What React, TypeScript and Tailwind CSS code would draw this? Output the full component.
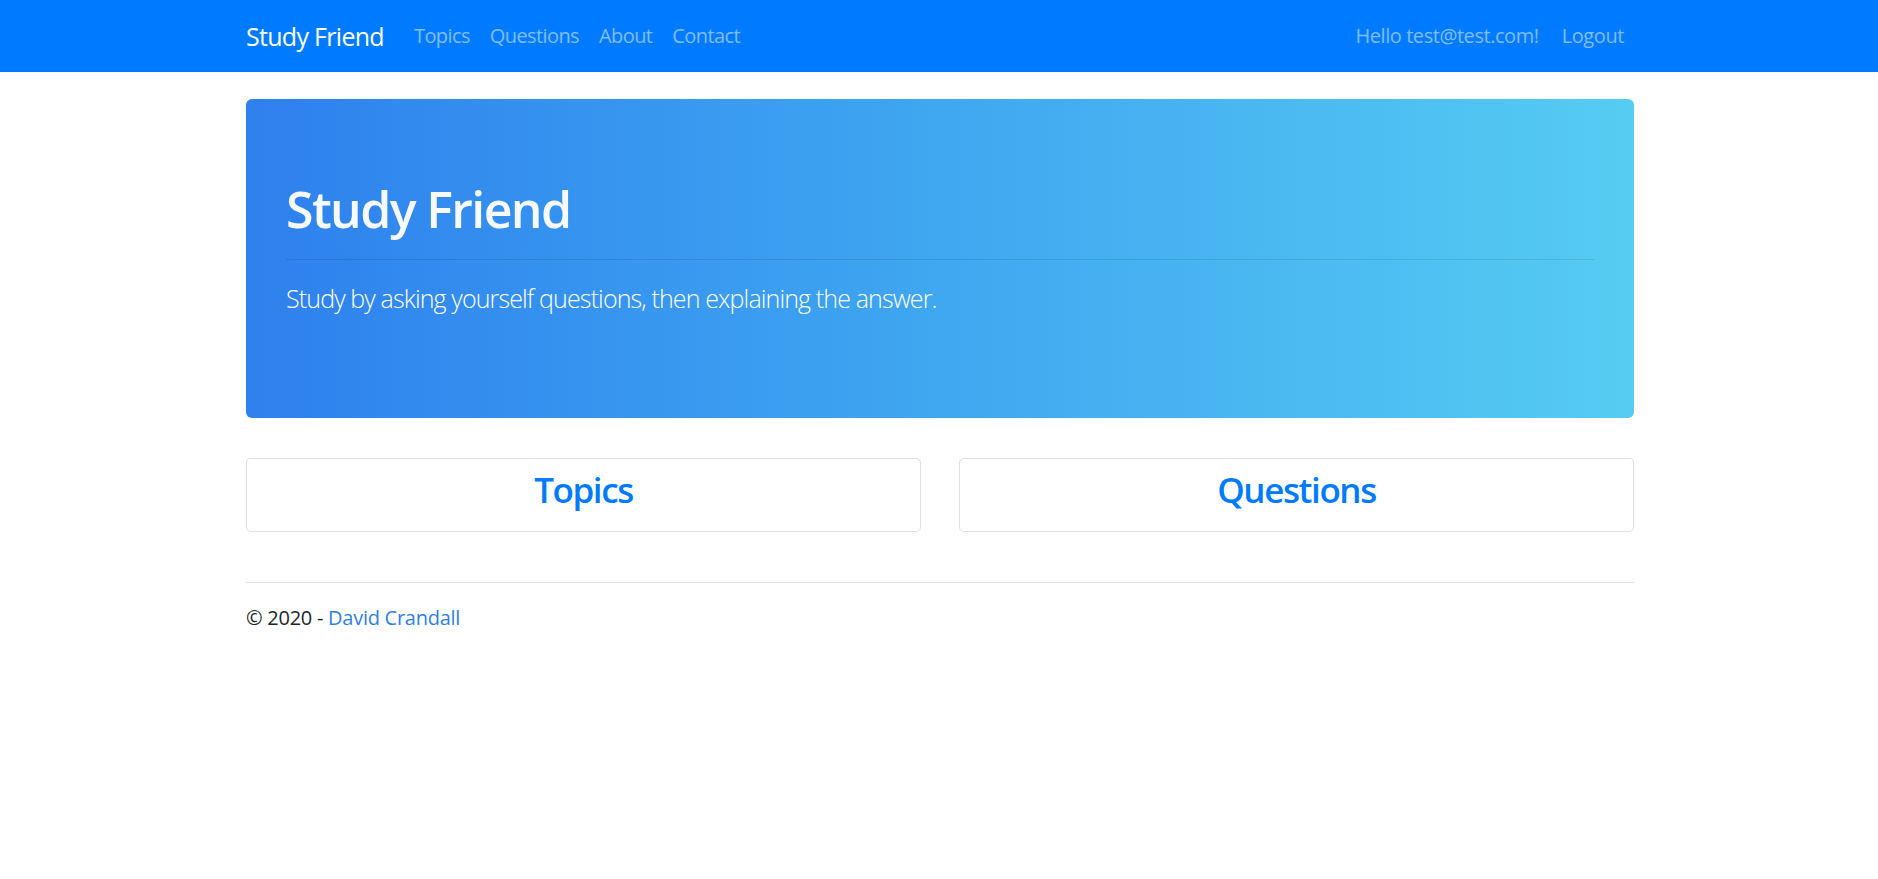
import React, { FC } from 'react';

const navLinks = ['Topics', 'Questions', 'About', 'Contact'];

// Container: 1388px content, starting at x=246
const container = 'mx-auto w-[1390px] pl-[2px]';

const Navbar: FC = () => {
  return (
    <nav className="h-[72px] bg-[#007bff]">
      <div className={`${container} flex h-full items-center justify-between`}>
        {/* Brand and left links */}
        <div className="flex items-center">
          <a href="#" className="mr-[20px] text-[25px] leading-[38px] tracking-[-0.028em] text-white">
            Study Friend
          </a>
          <ul className="flex items-center">
            {navLinks.map((link) => (
              <li key={link}>
                <a
                  href="#"
                  className="block px-[10px] text-[20px] leading-[30px] tracking-[-0.03em] text-white/50"
                >
                  {link}
                </a>
              </li>
            ))}
          </ul>
        </div>

        {/* User area */}
        <div className="flex items-center">
          <a href="#" className="block px-[10px] text-[20px] leading-[30px] tracking-[-0.022em] text-white/50">
            Hello test@test.com!
          </a>
          <button className="ml-[3px] px-[10px] text-[20px] leading-[30px] tracking-[-0.02em] text-white/50">
            Logout
          </button>
        </div>
      </div>
    </nav>
  );
};

const LinkCard: FC<{ title: string }> = ({ title }) => (
  <a
    href="#"
    className="flex-1 rounded-[5px] border border-black/[0.125] bg-white px-[25px] py-[10px] text-center"
  >
    <h3 className="mb-[10px] text-[35px] font-semibold leading-[42px] tracking-[-0.04em] text-[#007bff]">
      {title}
    </h3>
  </a>
);

const App: FC = () => {
  return (
    <div className="min-h-screen bg-white text-[#212529] font-['Open_Sans','Noto_Sans',sans-serif]">
      <Navbar />

      <main className={`${container} pt-[27px]`}>
        {/* Jumbotron */}
        <div className="rounded-[6px] bg-gradient-to-r from-[#2f80ed] to-[#56ccf2] px-[40px] py-[80px]">
          <h1 className="mb-[20px] text-[50px] font-semibold leading-[60px] tracking-[-0.032em] text-[#f6f9fd]">
            Study Friend
          </h1>
          <hr className="mb-[20px] border-0 border-t border-black/10" />
          <p className="mb-[20px] text-[25px] font-light leading-[37.5px] tracking-[-0.035em] text-white">
            Study by asking yourself questions, then explaining the answer.
          </p>
        </div>

        {/* Cards */}
        <div className="mt-[40px] flex gap-[38px]">
          <LinkCard title="Topics" />
          <LinkCard title="Questions" />
        </div>
      </main>

      {/* Footer */}
      <footer className={`${container} mt-[50px]`}>
        <div className="border-t border-[#e5e5e5] pt-[20px]">
          <p className="text-[20px] leading-[30px] tracking-[-0.013em]">
            © 2020 - <a href="#" className="text-[#2f7fe4]">David Crandall</a>
          </p>
        </div>
      </footer>
    </div>
  );
};

export default App;
